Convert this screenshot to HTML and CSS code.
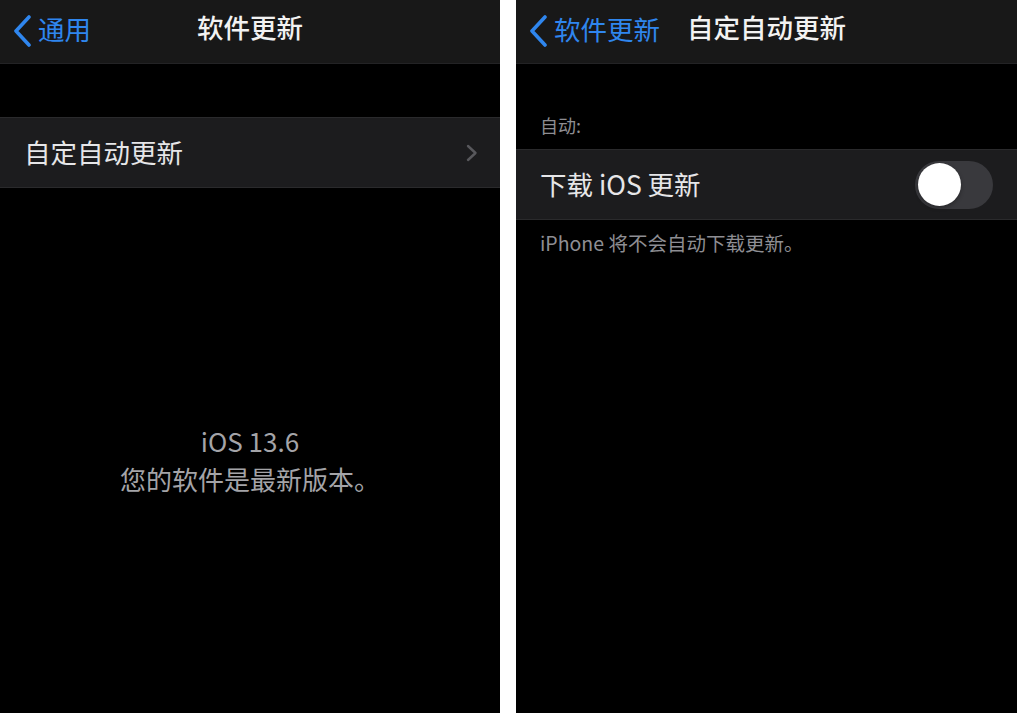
FILE: index.html
```html
<!DOCTYPE html>
<html lang="zh">
<head>
  <meta charset="UTF-8">
  <title>软件更新</title>
  <link rel="stylesheet" href="styles.css">
</head>
<body>
  <div class="screens">
    <!-- 软件更新 -->
    <section class="screen">
      <header class="navbar">
        <a class="back">
          <svg class="back-chev" viewBox="0 0 20 32" width="20" height="32"><path d="M17 2 L4 16 L17 30" /></svg>
          <span>通用</span>
        </a>
        <h1 class="title">软件更新</h1>
      </header>
      <div class="group group-first">
        <div class="cell">
          <span class="cell-label">自定自动更新</span>
          <svg class="disclosure" viewBox="0 0 12 18" width="12" height="18"><path d="M2 2 L9.5 9 L2 16" /></svg>
        </div>
      </div>
      <div class="status">
        <div>iOS 13.6</div>
        <div>您的软件是最新版本。</div>
      </div>
    </section>

    <!-- 自定自动更新 -->
    <section class="screen">
      <header class="navbar">
        <a class="back">
          <svg class="back-chev" viewBox="0 0 20 32" width="20" height="32"><path d="M17 2 L4 16 L17 30" /></svg>
          <span>软件更新</span>
        </a>
        <h1 class="title">自定自动更新</h1>
      </header>
      <div class="group-header">自动:</div>
      <div class="group">
        <div class="cell">
          <span class="cell-label">下载 iOS 更新</span>
          <span class="switch"><span class="knob"></span></span>
        </div>
      </div>
      <div class="group-footer">iPhone 将不会自动下载更新。</div>
    </section>
  </div>
</body>
</html>
```

FILE: styles.css
```css
body { margin: 0; background: #fff; font-family: "Noto Sans CJK SC", "Noto Sans", sans-serif; }
.screens { display: flex; gap: 16px; height: 713px; }
.screen { flex: 1; background: #000; color: #e9e9eb; overflow: hidden; }
.screen:first-child { flex: 0 0 500px; }

.navbar { position: relative; height: 64px; background: #181818; border-bottom: 1px solid #232325; box-sizing: border-box; display: flex; align-items: center; }
.back { display: flex; align-items: center; gap: 6px; padding-left: 12px; color: #2f86ee; font-size: 26.5px; position: relative; z-index: 1; }
.back-chev { fill: none; stroke: #2f86ee; stroke-width: 3.6; stroke-linecap: round; stroke-linejoin: round; margin-top: -2px; }
.back span { margin-top: -7px; }
.title { position: absolute; left: 0; right: 0; top: 0; margin: 0; text-align: center; font-size: 26.5px; font-weight: 500; line-height: 54px; color: #f2f2f2; }

.group { background: #1c1c1e; border-top: 1px solid #2a2a2c; border-bottom: 1px solid #2a2a2c; }
.group-first { margin-top: 53px; }
.cell { height: 69px; display: flex; align-items: center; justify-content: space-between; padding: 0 24px; }
.cell-label { font-size: 26.5px; margin-top: -2px; color: #e6e6e8; }
.disclosure { fill: none; stroke: #58585c; stroke-width: 2.4; stroke-linecap: round; stroke-linejoin: round; margin-right: -2px; }

.status { margin-top: 234px; text-align: center; color: #a4a4a8; font-size: 26px; line-height: 38px; }

.group-header { padding: 0 24px; margin-top: 48px; height: 37px; font-size: 18px; color: #8e8e93; }
.group-footer { padding: 8px 24px; font-size: 19.5px; color: #8e8e93; }

.switch { width: 78px; height: 48px; border-radius: 24px; background: #39393d; display: flex; align-items: center; padding: 0 3px; box-sizing: border-box; }
.knob { width: 43px; height: 43px; border-radius: 50%; background: #fff; box-shadow: 0 2px 4px rgba(0,0,0,0.3); }
```
